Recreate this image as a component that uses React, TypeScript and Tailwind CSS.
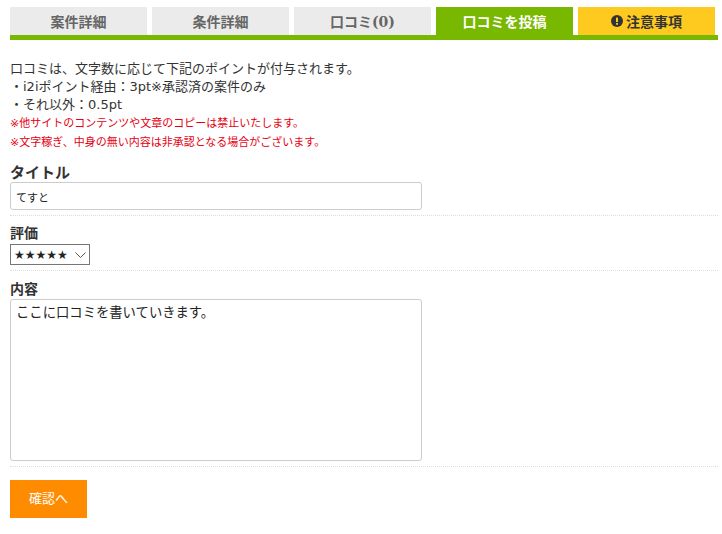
const tabs = ['案件詳細', '条件詳細'];

const Divider = () => <div className="h-px border-b border-dotted border-[#dddddd]" />;

const App = () => {
  return (
    <div className="min-h-[534px] bg-white pl-[10px] pr-1 pt-[7px] font-['DejaVu_Sans','Noto_Sans_CJK_JP',sans-serif] text-[13px] text-[#333333]">
      {/* Tabs */}
      <div className="flex gap-[5px] border-b-[5px] border-[#79b800]">
        {tabs.map((tab) => (
          <div
            key={tab}
            className="flex h-[28px] w-[137px] items-center justify-center bg-[#ebebeb] pt-[2px] text-[14px] font-bold text-[#666666]"
          >
            {tab}
          </div>
        ))}
        <div className="flex h-[28px] w-[137px] items-center justify-center bg-[#ebebeb] pt-[2px] text-[14px] font-bold text-[#666666]">
          口コミ<span className="font-['DejaVu_Serif',serif] text-[14px]">(0)</span>
        </div>
        <div className="flex h-[28px] w-[137px] items-center justify-center bg-[#79b800] pt-[2px] text-[14px] font-bold text-white">
          口コミを投稿
        </div>
        <div className="flex h-[28px] w-[137px] items-center justify-center gap-[3px] bg-[#ffca1f] pt-[2px] text-[14px] font-bold text-[#333333]">
          <svg viewBox="0 0 12 12" className="-mt-[2px] h-3 w-3">
            <circle cx="6" cy="6" r="6" fill="#333333" />
            <rect x="5" y="2.4" width="2" height="4.6" rx="0.6" fill="#ffca1f" />
            <rect x="5" y="8" width="2" height="1.8" rx="0.5" fill="#ffca1f" />
          </svg>
          注意事項
        </div>
      </div>

      {/* Notes */}
      <div className="mt-[20px] leading-[18px]">
        <p>口コミは、文字数に応じて下記のポイントが付与されます。</p>
        <p>・i2iポイント経由：3pt※承認済の案件のみ</p>
        <p>・それ以外：0.5pt</p>
      </div>
      <div className="text-[11px] leading-[19px] text-[#e60012]">
        <p>※他サイトのコンテンツや文章のコピーは禁止いたします。</p>
        <p>※文字稼ぎ、中身の無い内容は非承認となる場合がございます。</p>
      </div>

      {/* Form */}
      <form className="mt-[10px]">
        <label className="block pt-[2px] text-[15px] leading-[18px] font-bold">タイトル</label>
        <input
          readOnly
          value="てすと"
          className="block h-[28px] w-[412px] rounded-[3px] border border-[#cccccc] px-[5px] pt-[2px] text-[11px] text-[#222222] outline-none"
        />
        <div className="mt-[5px]">
          <Divider />
        </div>

        <label className="mt-[8px] mb-[2px] block text-[14px] leading-[18px] font-bold">評価</label>
        <div className="relative h-[21px] w-[80px]">
          <select className="block h-[21px] w-[80px] appearance-none border border-[#767676] bg-white pl-[3px] text-[12px] text-[#222222] outline-none">
            <option>★★★★★</option>
          </select>
          <svg
            viewBox="0 0 11 6"
            fill="none"
            stroke="#555555"
            className="pointer-events-none absolute top-[8px] right-[4px] h-[6px] w-[11px]"
          >
            <path d="M0.5 0.5 L5.5 5.5 L10.5 0.5" />
          </svg>
        </div>
        <div className="mt-[5px]">
          <Divider />
        </div>

        <label className="mt-[9px] block text-[14px] leading-[19px] font-bold">内容</label>
        <textarea
          readOnly
          value="ここに口コミを書いていきます。"
          className="block h-[162px] w-[412px] resize-none rounded-[3px] border border-[#cccccc] px-[5px] pt-[4px] pb-[3px] text-[13.33px] leading-[18px] text-[#222222] outline-none"
        />
        <div className="mt-[5px]">
          <Divider />
        </div>

        <button
          type="button"
          className="mt-[13px] block h-[38px] w-[77px] bg-[#ff8c00] text-[13px] text-white"
        >
          確認へ
        </button>
      </form>
    </div>
  );
};

export default App;
